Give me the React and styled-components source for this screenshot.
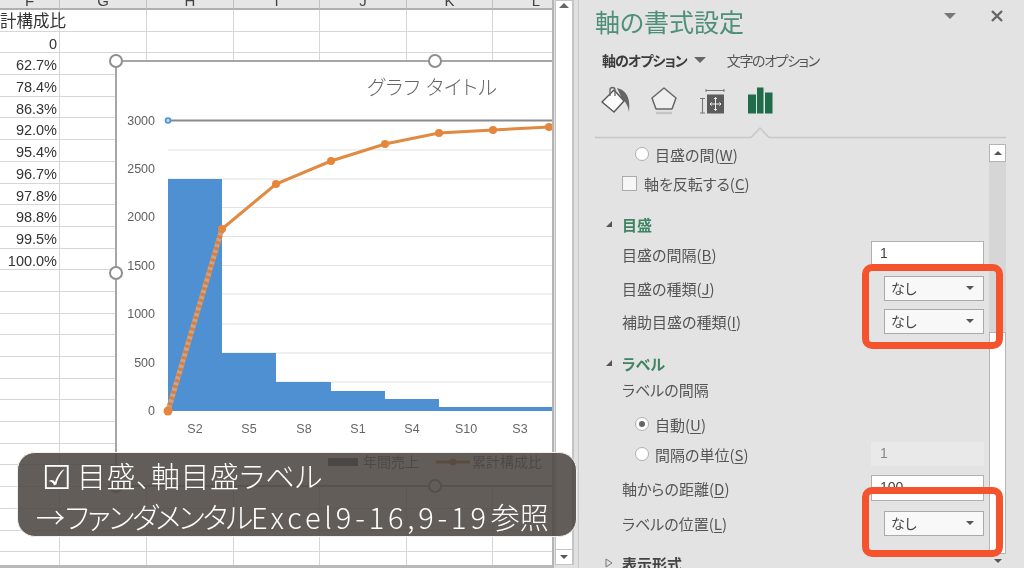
import React from 'react';
import styled, { createGlobalStyle } from 'styled-components';

const Global = createGlobalStyle`
  html, body { margin: 0; padding: 0; background: #e3e3e3; }
  body {
    font-family: "Noto Sans CJK JP", "Noto Sans", sans-serif; overflow: hidden;
    font-feature-settings: "palt";
  }
  * { box-sizing: border-box; }
`;

const Page = styled.div`
  position: relative; width: 1024px; height: 568px; overflow: hidden;
  display: flex; filter: blur(0.35px);
`;

/* ---------- worksheet ---------- */
const SheetArea = styled.div`
  position: relative; width: 555px; height: 568px; overflow: hidden;
  background: #fff; border-right: 2px solid #b4b4b4; border-bottom: 3px solid #b8b8b8;
`;
const HeadGrid = styled.div`
  display: grid; height: 10px;
  grid-template-columns: 60px 87px 87px 86px 87px 86px 87px;
`;
const SheetGrid = styled.div`
  display: grid;
  grid-template-columns: 60px 87px 87px 86px 87px 86px 87px;
  grid-auto-rows: 21.7px;
`;
const HeadCell = styled.div`
  height: 10px; overflow: hidden; background: #e6e6e6;
  border-right: 1px solid #c2c2c2; border-bottom: 2px solid #b0b0b0;
  display: flex; align-items: flex-end; justify-content: center;
  font: 15px/15px "Liberation Sans", sans-serif; color: #444;
`;
const Cell = styled.div`
  border-right: 1px solid #d6d6d6; border-bottom: 1px solid #d6d6d6;
  padding-right: 2px; text-align: right; white-space: nowrap;
  font: 14.5px/24px "Liberation Sans", "Noto Sans CJK JP", sans-serif; color: #333;
`;
const ColumnTitle = styled.span`
  display: block; width: 70px; text-align: left;
  font: 16.5px/21px "Noto Sans CJK JP", sans-serif; color: #333;
`;

/* ---------- chart object, floats over the sheet ---------- */
const ChartFrame = styled.div`
  position: absolute; left: 115px; top: 60px; width: 440px; height: 427px;
  background: #fff; border: 2px solid #a6a6a6; border-right: 0;
`;
const ChartSvg = styled.svg`
  position: absolute; left: -2px; top: -2px; display: block;
`;
const ChartTitle = styled.text`
  font-size: 20px; fill: #666; font-weight: 300; letter-spacing: 0.6px;
`;
const Handle = styled.span`
  position: absolute; left: ${p => p.$x - 7}px; top: ${p => p.$y - 7}px;
  width: 14px; height: 14px; border-radius: 50%;
  background: #fff; border: 2px solid #8f8f8f;
`;

/* ---------- sheet scrollbar ---------- */
const SheetScroll = styled.div`
  width: 25px; height: 568px; background: #e0e0e0; padding: 0 4px 3px 1px;
  display: flex; flex-direction: column;
  border-right: 1px solid #c8c8c8;
`;
const SheetThumb = styled.div`
  flex: 1; background: #fff; border: 1px solid #c4c4c4; border-right-width: 2px;
  display: flex; flex-direction: column; justify-content: space-between; align-items: center;
`;
const ArrowUp = styled.span`
  width: 0; height: 0; border: ${p => p.$s || 5}px solid transparent; border-top: 0;
  border-bottom: ${p => p.$s || 5}px solid ${p => p.$c || '#555'};
  margin-top: ${p => p.$m || 0}px;
`;
const ArrowDown = styled.span`
  width: 0; height: 0; border: ${p => p.$s || 5}px solid transparent; border-bottom: 0;
  border-top: ${p => p.$s || 5}px solid ${p => p.$c || '#555'};
`;
const SheetDownBtn = styled.div`
  height: 15px; width: 100%; border-top: 1px solid #c4c4c4;
  display: flex; align-items: center; justify-content: center;
`;

/* ---------- format pane ---------- */
const Pane = styled.div`
  flex: 1; height: 568px; background: #e3e3e3; padding: 0 18px 0 16px;
  display: flex; flex-direction: column; color: #555;
`;
const PaneHead = styled.div`
  height: 44px; display: flex; align-items: center; justify-content: space-between;
  padding-right: 3px;
`;
const Title = styled.h1`
  margin: -2px 0 0; font-size: 25px; font-weight: 400; line-height: 44px; color: #4d8f78;
`;
const HeadIcons = styled.div`
  display: flex; align-items: center; gap: 35px; margin-top: -12px;
`;
const CloseMark = styled.svg`
  display: block;
`;
const Tabs = styled.div`
  height: 32px; display: flex; align-items: center; padding-left: 7px;
`;
const Tab = styled.span`
  font-size: 14px; white-space: nowrap; letter-spacing: ${p => (p.$on ? -0.9 : -1.4)}px;
  font-weight: ${p => (p.$on ? 700 : 400)};
  color: ${p => (p.$on ? '#3c3c3c' : '#555')};
`;
const TabCaret = styled.span`
  margin: 0 21px 0 7px; width: 0; height: 0;
  border: 6px solid transparent; border-bottom: 0; border-top: 6px solid #666;
`;
const IconRow = styled.div`
  height: 47px; display: flex; align-items: center; gap: 19px; padding: 0 0 0 6px;
`;
const IconBtn = styled.svg`
  display: block; width: 30px; height: 30px;
`;
const Divider = styled.svg`
  display: block; width: 411px; height: 16px; flex: none;
`;
const Body = styled.div`
  flex: 1; min-height: 0; display: flex; justify-content: space-between; overflow: hidden;
`;
const Content = styled.div`
  width: 394px; padding-right: 5px; flex: none;
`;
const Row = styled.div`
  height: ${p => p.$h || 26}px; margin-top: ${p => p.$top || 0}px;
  padding-left: ${p => p.$indent || 27}px;
  display: flex; align-items: center; justify-content: space-between;
  font-size: 15px; white-space: nowrap;
`;
const Section = styled(Row)`
  padding-left: 10px; justify-content: flex-start; gap: 9px;
  font-size: 15px; font-weight: 700; color: ${p => (p.$dark ? '#444' : '#3f8463')};
`;
const Twist = styled.svg`
  display: block; flex: none;
`;
const Inline = styled.span`
  display: flex; align-items: center; gap: ${p => p.$gap || 6}px;
`;
const Radio = styled.span`
  width: 14px; height: 14px; border-radius: 50%; flex: none;
  background: #fff; border: 1px solid #b0b0b0;
  display: flex; align-items: center; justify-content: center;
  &::after {
    content: ''; width: 6px; height: 6px; border-radius: 50%;
    background: ${p => (p.$on ? '#666' : 'transparent')};
  }
`;
const Check = styled.span`
  width: 15px; height: 15px; flex: none; background: #f6f6f6; border: 1px solid #aaa;
`;
const U = styled.span`
  text-decoration: underline; text-underline-offset: 2px; text-decoration-thickness: 1px;
`;
const Field = styled.div`
  width: 113px; height: ${p => p.$h || 26}px; padding-left: 8px; flex: none;
  background: ${p => (p.$off ? '#e9e9e9' : '#fff')};
  border: 1px solid ${p => (p.$off ? '#e9e9e9' : '#b0b0b0')};
  color: ${p => (p.$off ? '#888' : '#444')};
  font: 14px/${p => (p.$h || 26) - 4}px "Liberation Sans", sans-serif;
`;
const Select = styled.div`
  width: 100px; height: 25px; flex: none; background: #f8f8f8; border: 1px solid #aaa;
  padding: 0 9px 0 6px; display: flex; align-items: center; justify-content: space-between;
  font-size: 14px; color: #444;
`;
const PaneScroll = styled.div`
  width: 17px; flex: none; margin-top: 5px; display: flex; flex-direction: column; height: 423px;
`;
const ScrollBtn = styled.div`
  height: 18px; flex: none; background: #fff; border: 1px solid #b4b4b4;
  display: flex; align-items: center; justify-content: center;
`;
const ScrollTrack = styled.div`
  height: 170px; flex: none; background: #d6d6d6;
`;
const ScrollThumb = styled.div`
  flex: 1; background: #fff; border: 1px solid #b4b4b4;
`;
const ScrollEnd = styled.div`
  height: 13px; flex: none; display: flex; align-items: center; justify-content: center;
`;

/* ---------- overlays ---------- */
const Callout = styled.div`
  position: absolute; left: 862px; top: ${p => p.$top}px; width: 141px; height: ${p => p.$h}px;
  border: 7.5px solid #f4532e; border-radius: 10px;
`;
const Caption = styled.div`
  position: absolute; left: 17px; top: 452px; width: 560px; height: 85px;
  background: rgba(76, 71, 66, 0.88); border: 1.5px solid #f0f0f0; border-radius: 18px;
  padding: 2px 0 0 24px; color: #fff;
  display: flex; flex-direction: column;
`;
const CaptionLine = styled.div`
  font-size: 29px; line-height: 41px; white-space: nowrap; font-weight: 300;
  margin-left: ${p => p.$ml || 0}px; display: flex; align-items: center;
`;
const CaptionCheck = styled.span`
  font-size: 33px; margin-right: 5px;
`;
const CaptionWide = styled.span`
  letter-spacing: 0.5px;
`;
const CaptionKana = styled.span`
  letter-spacing: -2.1px;
`;
const CaptionLatin = styled.span`
  letter-spacing: 3.8px; margin-right: 1px;
`;

const cols = ['F', 'G', 'H', 'I', 'J', 'K', 'L'];
const values = ['0', '62.7%', '78.4%', '86.3%', '92.0%', '95.4%', '96.7%', '97.8%', '98.8%', '99.5%', '100.0%'];
const rowCount = 26;

const gridYs = [150, 179, 207.5, 236.5, 265.5, 294, 324, 353, 382];
const axis = [['3000', 120], ['2500', 168], ['2000', 216], ['1500', 265], ['1000', 313], ['500', 362], ['0', 410]];
const bars = [[168, 222, 179], [222, 276, 353], [276, 331, 382], [331, 385, 391], [385, 439, 399], [439, 493, 407], [493, 556, 407]];
const cats = [['S2', 195], ['S5', 249], ['S8', 304], ['S1', 358], ['S4', 412], ['S10', 466], ['S3', 520]];
const pts = [[222, 229], [276, 184], [331, 161], [385, 144], [439, 133], [493, 130], [549, 127]];

function Chart() {
  const line = pts.map(p => p.join(',')).join(' ');
  return (
    <ChartSvg width="440" height="427" viewBox="115 60 440 427" fontFamily="'Noto Sans CJK JP', sans-serif">
      <ChartTitle x="367" y="95">グラフ タイトル</ChartTitle>
      {gridYs.map(y => <line key={y} x1="168" x2="556" y1={y} y2={y} stroke="#e2e2e2" strokeWidth="1.1" />)}
      {axis.map(([t, y]) => (
        <text key={t} x="155" y={y + 4.5} fontSize="12.5" fill="#5f5f5f" textAnchor="end" fontFamily="'Liberation Sans', sans-serif">{t}</text>
      ))}
      {bars.map(([a, b, y]) => <rect key={a} x={a} y={y} width={b - a} height={411 - y} fill="#4f90d3" />)}
      <line x1="168" x2="556" y1="120.5" y2="120.5" stroke="#8a8a8a" strokeWidth="2" />
      <circle cx="168" cy="120.5" r="2.5" fill="#bcd6ee" stroke="#4f90d3" strokeWidth="1.6" />
      <line x1="168" y1="411" x2="222" y2="229" stroke="#c9a48d" strokeWidth="5" />
      <line x1="168" y1="411" x2="222" y2="229" stroke="#d9803f" strokeWidth="5" strokeDasharray="3 3" />
      <polyline points={line} fill="none" stroke="#e08a42" strokeWidth="3" />
      <circle cx="168" cy="411" r="4.5" fill="#e5863a" />
      {pts.map(([x, y]) => <circle key={x} cx={x} cy={y} r="4" fill="#e5863a" />)}
      {cats.map(([t, x]) => (
        <text key={t} x={x} y="433" fontSize="12.5" fill="#666" textAnchor="middle" fontFamily="'Liberation Sans', sans-serif">{t}</text>
      ))}
      <rect x="328" y="458" width="30" height="8" fill="#3d4f66" />
      <text x="363" y="467" fontSize="14" fill="#555">年間売上</text>
      <line x1="436" x2="470" y1="462" y2="462" stroke="#b0682c" strokeWidth="3" />
      <circle cx="453" cy="462" r="3.5" fill="#c2692a" />
      <text x="472" y="467" fontSize="14" fill="#555">累計構成比</text>
    </ChartSvg>
  );
}

function BucketIcon() {
  return (
    <IconBtn viewBox="0 0 30 30">
      <path d="M1 17 L13 5 L23 16 L13 27 Z" fill="#fbfbfb" stroke="#555" strokeWidth="1.4" strokeLinejoin="round" />
      <path d="M9 11 V5 a2.5 2.5 0 0 1 5 0 V11" fill="none" stroke="#666" strokeWidth="1.3" />
      <path d="M16 3 C24 5 30 11 28 27 C27 21 25 17 21 14 Z" fill="#666" />
    </IconBtn>
  );
}
function PentagonIcon() {
  return (
    <IconBtn viewBox="0 0 30 30">
      <path d="M14 3 L26 13 L22 24 H6 L2 13 Z" fill="#efefef" stroke="#666" strokeWidth="1.5" strokeLinejoin="round" />
      <path d="M6 28 H22" stroke="#c4c4c4" strokeWidth="2.5" />
    </IconBtn>
  );
}
function SizeIcon() {
  return (
    <IconBtn viewBox="0 0 30 30">
      <path d="M7 5.5 H25 M7 4 V7 M25 4 V7" stroke="#777" strokeWidth="1" fill="none" />
      <path d="M3.5 13.5 V28 M1 13.5 H6 M1 28 H6" stroke="#777" strokeWidth="1.1" fill="none" />
      <rect x="8" y="9.5" width="17" height="19" fill="#5c5c5c" />
      <path d="M16.5 12.5 V25.5 M11 19 H22 M16.5 12.5 l-1.6 1.6 M16.5 12.5 l1.6 1.6 M16.5 25.5 l-1.6 -1.6 M16.5 25.5 l1.6 -1.6 M11 19 l1.6 -1.6 M11 19 l1.6 1.6 M22 19 l-1.6 -1.6 M22 19 l-1.6 1.6" stroke="#eee" strokeWidth="1" fill="none" />
    </IconBtn>
  );
}
function BarsIcon() {
  return (
    <IconBtn viewBox="0 0 30 30">
      <rect x="0" y="9.5" width="8" height="19" fill="#1f6b4a" />
      <rect x="9" y="2.5" width="6.5" height="26" fill="#1f6b4a" />
      <rect x="17" y="7.5" width="7.5" height="21" fill="#1f6b4a" />
    </IconBtn>
  );
}

const Down = () => (
  <Twist width="8" height="8" viewBox="0 0 8 8"><path d="M7 1 V7 H1 Z" fill="#555" /></Twist>
);
const Right = () => (
  <Twist width="8" height="10" viewBox="0 0 8 10"><path d="M1 1 L7 5 L1 9 Z" fill="none" stroke="#777" /></Twist>
);
const Nashi = () => (
  <Select>なし<ArrowDown $s={4} $c="#555" /></Select>
);

export default function App() {
  return (
    <>
      <Global />
      <Page>
        <SheetArea>
          <HeadGrid>
            {cols.map(c => <HeadCell key={c}>{c}</HeadCell>)}
          </HeadGrid>
          <SheetGrid>
            {Array.from({ length: rowCount }).flatMap((_, r) =>
              cols.map((c, i) => (
                <Cell key={c + r}>
                  {i === 0 && r === 0 ? <ColumnTitle>計構成比</ColumnTitle> : i === 0 ? values[r - 1] : ''}
                </Cell>
              ))
            )}
          </SheetGrid>
          <ChartFrame><Chart /></ChartFrame>
          <Handle $x={116} $y={61} />
          <Handle $x={435} $y={61} />
          <Handle $x={116} $y={273} />
          <Handle $x={116} $y={486} />
          <Handle $x={435} $y={486} />
        </SheetArea>
        <SheetScroll>
          <SheetThumb>
            <ArrowUp $c="#666" $m={2} />
            <SheetDownBtn><ArrowDown $s={4} $c="#555" /></SheetDownBtn>
          </SheetThumb>
        </SheetScroll>
        <Pane>
          <PaneHead>
            <Title>軸の書式設定</Title>
            <HeadIcons>
              <ArrowDown $s={6} $c="#777" />
              <CloseMark width="12" height="12" viewBox="0 0 12 12">
                <path d="M1 1 L11 11 M11 1 L1 11" stroke="#666" strokeWidth="2.4" />
              </CloseMark>
            </HeadIcons>
          </PaneHead>
          <Tabs>
            <Tab $on>軸のオプション</Tab>
            <TabCaret />
            <Tab>文字のオプション</Tab>
          </Tabs>
          <IconRow>
            <BucketIcon />
            <PentagonIcon />
            <SizeIcon />
            <BarsIcon />
          </IconRow>
          <Divider viewBox="0 0 411 16">
            <path d="M0 14.5 H156 L165 5 L174 14.5 H411" fill="none" stroke="#c6c6c6" strokeWidth="1.3" />
          </Divider>
          <Body>
            <Content>
              <Row $h={30} $indent={40}><Inline><Radio /><span>目盛の間(<U>W</U>)</span></Inline></Row>
              <Row $h={28}><Inline $gap={7}><Check /><span>軸を反転する(<U>C</U>)</span></Inline></Row>
              <Section $h={24} $top={15}><Down />目盛</Section>
              <Row $top={5}><span>目盛の間隔(<U>B</U>)</span><Field>1</Field></Row>
              <Row $top={8}><span>目盛の種類(<U>J</U>)</span><Nashi /></Row>
              <Row $top={7}><span>補助目盛の種類(<U>I</U>)</span><Nashi /></Row>
              <Section $h={24} $top={17}><Down />ラベル</Section>
              <Row $h={24} $top={2}><span>ラベルの間隔</span></Row>
              <Row $h={24} $top={11} $indent={40}><Inline><Radio $on /><span>自動(<U>U</U>)</span></Inline></Row>
              <Row $h={24} $top={6} $indent={40}><Inline><Radio /><span>間隔の単位(<U>S</U>)</span></Inline><Field $off $h={24}>1</Field></Row>
              <Row $top={9}><span>軸からの距離(<U>D</U>)</span><Field>100</Field></Row>
              <Row $top={9}><span>ラベルの位置(<U>L</U>)</span><Nashi /></Row>
              <Section $h={24} $top={15} $dark><Right />表示形式</Section>
            </Content>
            <PaneScroll>
              <ScrollBtn><ArrowUp $s={4} $c="#555" /></ScrollBtn>
              <ScrollTrack />
              <ScrollThumb />
              <ScrollEnd><ArrowDown $s={4} $c="#555" /></ScrollEnd>
            </PaneScroll>
          </Body>
        </Pane>
        <Callout $top={264} $h={85} />
        <Callout $top={487} $h={70} />
        <Caption>
          <CaptionLine><CaptionCheck>☑</CaptionCheck><CaptionWide>目盛、軸目盛ラベル</CaptionWide></CaptionLine>
          <CaptionLine $ml={-6}>→<CaptionKana>ファンダメンタル</CaptionKana><CaptionLatin>Excel9-16,9-19</CaptionLatin>参照</CaptionLine>
        </Caption>
      </Page>
    </>
  );
}
